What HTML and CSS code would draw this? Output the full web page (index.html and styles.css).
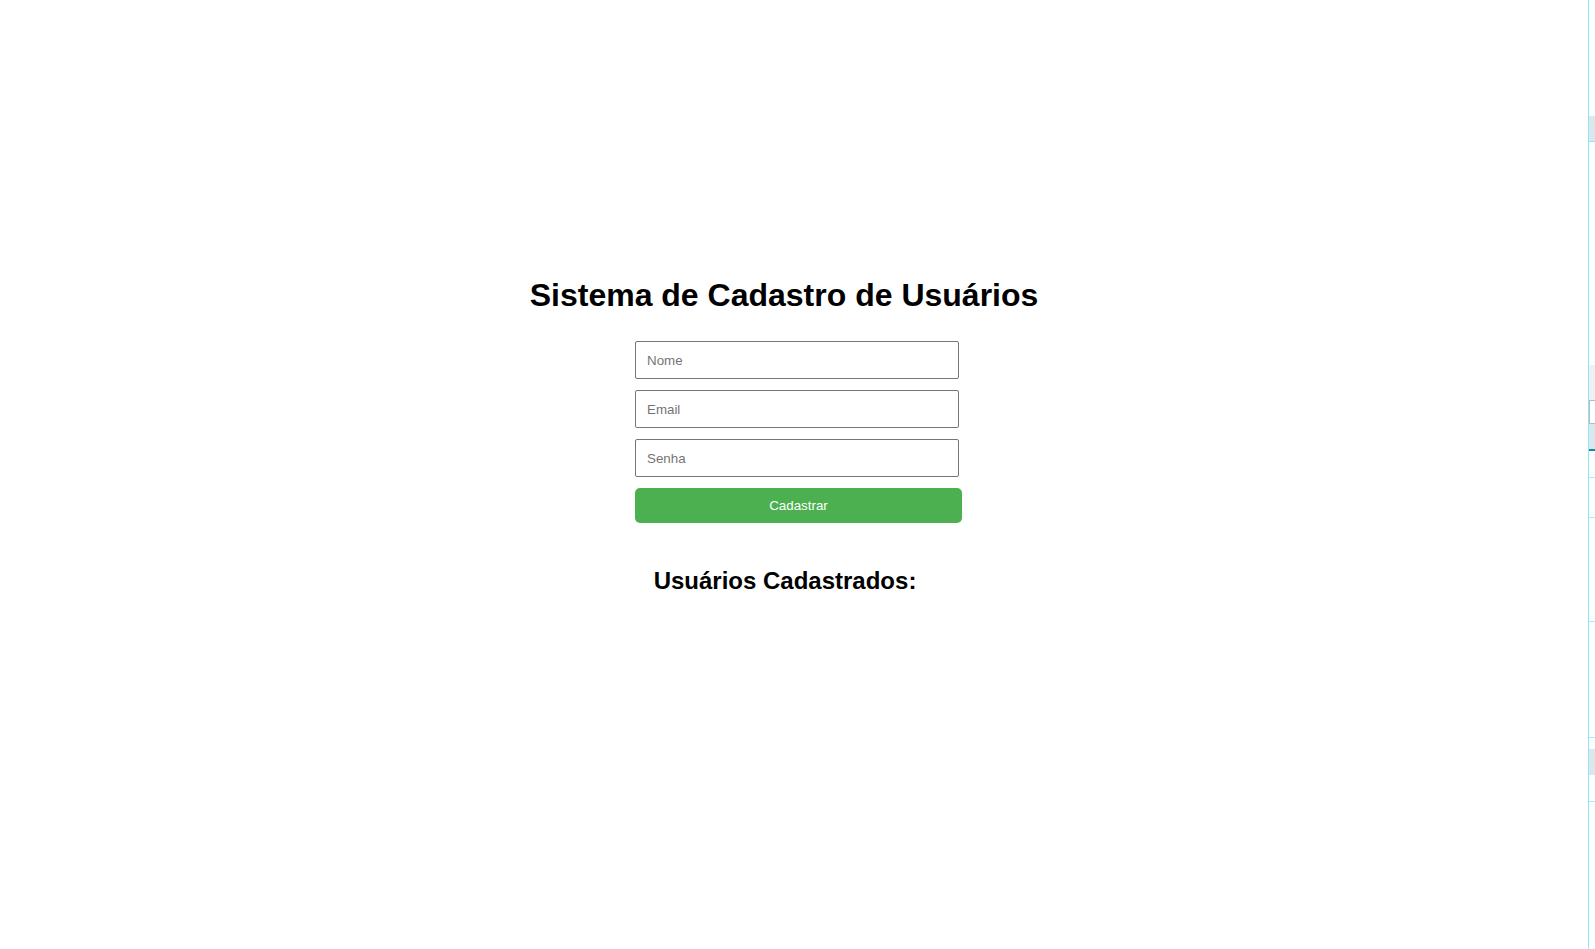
FILE: index.html
```html
<!DOCTYPE html>
<html lang="pt-BR">
<head>
<meta charset="utf-8">
<title>Sistema de Cadastro de Usuários</title>
<link rel="stylesheet" href="styles.css">
</head>
<body>
<main class="page">
  <h1 class="title">Sistema de Cadastro de Usuários</h1>
  <form class="form">
    <input class="field" type="text" placeholder="Nome">
    <input class="field" type="email" placeholder="Email">
    <input class="field" type="password" placeholder="Senha">
    <button class="submit" type="button">Cadastrar</button>
  </form>
  <h2 class="subtitle">Usuários Cadastrados:</h2>
  <ul class="users"></ul>
</main>
<aside class="devtools">
  <div class="dt-gap1"></div>
  <div class="dt-band"></div>
  <div class="dt-gap2"></div>
  <div class="dt-gray"></div>
  <div class="dt-box"></div>
  <div class="dt-blue"></div>
  <div class="dt-row r1"></div>
  <div class="dt-row r2"></div>
  <div class="dt-row r3"></div>
  <div class="dt-row r4"></div>
  <div class="dt-band2"></div>
  <div class="dt-row r5"></div>
</aside>
</body>
</html>
```
FILE: styles.css
```css
html, body {
  margin: 0;
  padding: 0;
  background: #fff;
}
body {
  font-family: "Liberation Sans", Arial, sans-serif;
  color: #000;
  width: 1595px;
  height: 949px;
  overflow: hidden;
  position: relative;
}
.page {
  display: flex;
  flex-direction: column;
  padding-top: 277px;
}
.title {
  margin: 0;
  width: 1568px;
  text-align: center;
  font-size: 32px;
  line-height: 37px;
  font-weight: bold;
}
.form {
  margin: 27px 0 0 635px;
  width: 327px;
  display: flex;
  flex-direction: column;
  gap: 11px;
}
.field {
  box-sizing: border-box;
  width: 324px;
  height: 38px;
  padding: 0 11px;
  border: 1px solid #767676;
  border-radius: 2px;
  font-family: "Liberation Sans", Arial, sans-serif;
  font-size: 13.33px;
  color: #000;
  background: #fff;
  outline: none;
}
.field::placeholder {
  color: #757575;
}
.submit {
  box-sizing: border-box;
  width: 327px;
  height: 35px;
  border: none;
  border-radius: 5px;
  background: #4caf50;
  color: #fff;
  font-family: "Liberation Sans", Arial, sans-serif;
  font-size: 13.33px;
  padding: 0;
  cursor: pointer;
}
.subtitle {
  margin: 44px 0 0;
  width: 1570px;
  text-align: center;
  font-size: 24px;
  line-height: 28px;
  font-weight: bold;
}
.users {
  margin: 0;
  padding: 0;
  list-style: none;
}
.devtools {
  position: absolute;
  top: 0;
  left: 1588px;
  width: 7px;
  height: 949px;
  border-left: 1px solid #8fe6f7;
  background: #fbfdfe;
  display: flex;
  flex-direction: column;
}
.dt-gap1 { height: 116px; }
.dt-band { height: 25px; background: #dae7eb; border-bottom: 1px solid #8fe6f7; }
.dt-gap2 { height: 223px; }
.dt-gray { height: 35px; background: #f0f0f0; }
.dt-box { height: 22px; background: #fff; border: 1px solid #bbb; border-right: none; }
.dt-blue { height: 25px; background: #d9e8ed; border-bottom: 2px solid #1a8a96; }
.dt-row { border-bottom: 1px solid #a7eaf6; }
.dt-row.r1 { height: 26px; }
.dt-row.r2 { height: 39px; }
.dt-row.r3 { height: 103px; }
.dt-row.r4 { height: 115px; }
.dt-band2 { height: 26px; margin-top: 11px; background: #dae7eb; }
.dt-row.r5 { height: 26px; }
```
